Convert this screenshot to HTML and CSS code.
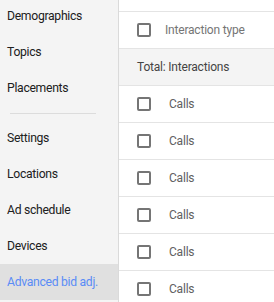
FILE: index.html
```html
<!DOCTYPE html>
<html lang="en">
<head>
    <meta charset="UTF-8">
    <meta name="viewport" content="width=device-width, initial-scale=1.0">
    <title>Advanced bid adjustments</title>
    <link rel="stylesheet" href="styles.css">
</head>
<body>
    <div class="page">
        <nav class="sidebar">
            <ul class="nav-list">
                <li class="nav-item">Demographics</li>
                <li class="nav-item">Topics</li>
                <li class="nav-item">Placements</li>
            </ul>
            <hr class="nav-divider">
            <ul class="nav-list">
                <li class="nav-item">Settings</li>
                <li class="nav-item">Locations</li>
                <li class="nav-item">Ad schedule</li>
                <li class="nav-item">Devices</li>
                <li class="nav-item selected">Advanced bid adj.</li>
            </ul>
        </nav>

        <main class="table">
            <div class="table-top"></div>
            <div class="row header-row">
                <span class="checkbox"></span>
                <span class="cell head">Interaction type</span>
            </div>
            <div class="row total-row">
                <span class="cell total">Total: Interactions</span>
            </div>
            <div class="row">
                <span class="checkbox"></span>
                <span class="cell calls">Calls</span>
            </div>
            <div class="row">
                <span class="checkbox"></span>
                <span class="cell calls">Calls</span>
            </div>
            <div class="row">
                <span class="checkbox"></span>
                <span class="cell calls">Calls</span>
            </div>
            <div class="row">
                <span class="checkbox"></span>
                <span class="cell calls">Calls</span>
            </div>
            <div class="row">
                <span class="checkbox"></span>
                <span class="cell calls">Calls</span>
            </div>
            <div class="row">
                <span class="checkbox"></span>
                <span class="cell calls">Calls</span>
            </div>
        </main>
    </div>
</body>
</html>
```

FILE: styles.css
```css
body {
    font-family: Roboto, Arial, sans-serif;
    margin: 0;
    padding: 0;
    background-color: #fff;
    color: #333;
    overflow: hidden;
}

.page {
    display: flex;
    height: 302px;
}

.sidebar {
    width: 118px;
    flex-shrink: 0;
    background-color: #f4f4f4;
    border-right: 1px solid #dadada;
    margin-top: -2px;
}

.nav-list {
    list-style: none;
    margin: 0;
    padding: 0;
}

.nav-item {
    height: 36px;
    line-height: 36px;
    padding-left: 7px;
    font-size: 12.2px;
    letter-spacing: -0.3px;
    color: #202020;
    white-space: nowrap;
}

.nav-item.selected {
    background-color: #e0e0e0;
    color: #5a8cf6; /* azul seleccionado */
}

.nav-divider {
    border: none;
    border-top: 1px solid #dcdcdc;
    margin: 7px 22px 6px 10px;
}

.table {
    flex: 1;
}

.table-top {
    height: 11px;
}

.row {
    display: flex;
    align-items: center;
    height: 36px;
    border-top: 1px solid #e4e4e4;
    font-size: 12px;
    letter-spacing: -0.2px;
}

.checkbox {
    width: 10px;
    height: 10px;
    border: 2px solid #757575;
    border-radius: 2px;
    margin-left: 18px;
    margin-right: 14px;
}

.cell.head {
    color: #757575;
}

.total-row {
    background-color: #f4f4f4;
}

.cell.total {
    margin-left: 18px;
    color: #444;
}

.cell.calls {
    margin-left: 4px;
    color: #616161;
}
```
